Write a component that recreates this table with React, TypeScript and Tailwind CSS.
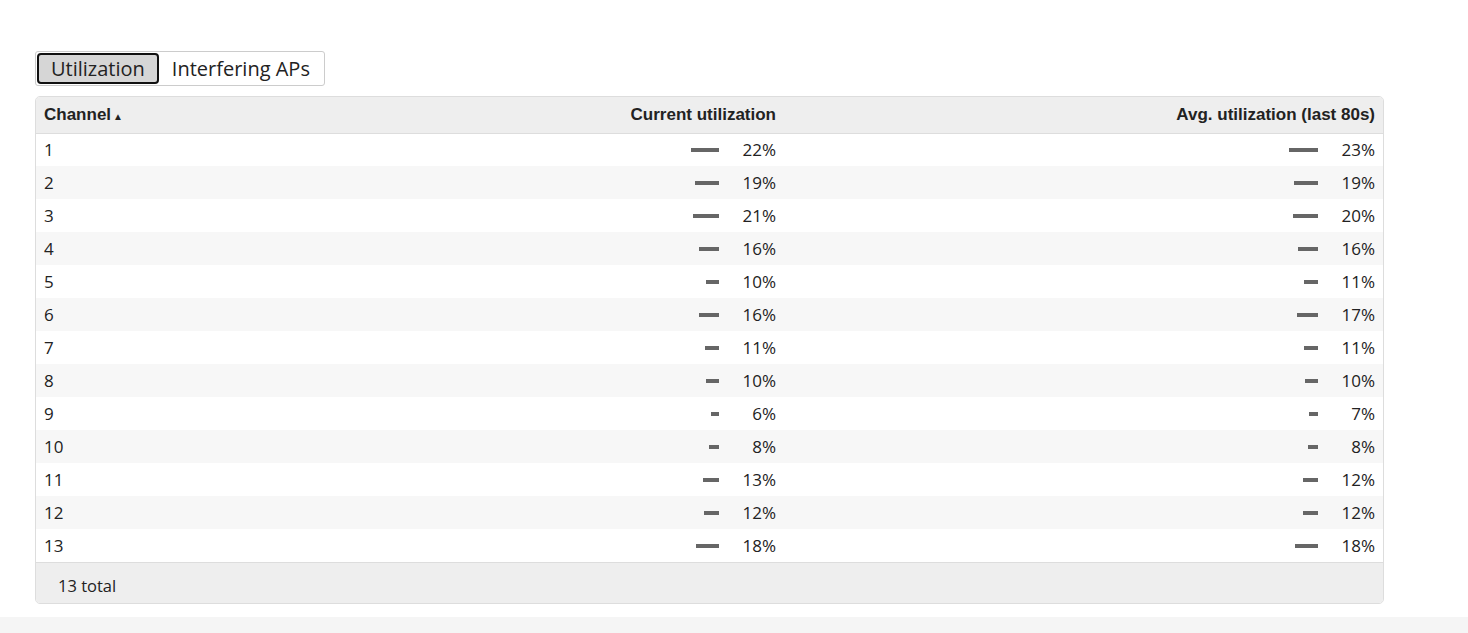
import React from "react";

const rows = [
  { ch: 1, cur: 22, avg: 23 },
  { ch: 2, cur: 19, avg: 19 },
  { ch: 3, cur: 21, avg: 20 },
  { ch: 4, cur: 16, avg: 16 },
  { ch: 5, cur: 10, avg: 11 },
  { ch: 6, cur: 16, avg: 17 },
  { ch: 7, cur: 11, avg: 11 },
  { ch: 8, cur: 10, avg: 10 },
  { ch: 9, cur: 6, avg: 7 },
  { ch: 10, cur: 8, avg: 8 },
  { ch: 11, cur: 13, avg: 12 },
  { ch: 12, cur: 12, avg: 12 },
  { ch: 13, cur: 18, avg: 18 },
];

const Usage = ({ pct }: { pct: number }) => {
  return (
    <div className="flex items-center justify-end">
      <div className="h-[4px] bg-[#666]" style={{ width: Math.round(pct * 1.25) }} />
      <span className="w-[57px] text-right">{pct}%</span>
    </div>
  );
};

const App = () => {
  return (
    <div className="min-h-[633px] bg-white font-['Open_Sans',sans-serif] text-[#222]">
      <div className="px-[35px] pt-[51px] pb-[13px]">
        <div className="inline-flex rounded-[3px] border border-[#ccc] bg-white p-[1px] text-[20px] leading-none">
          <button className="h-[31px] rounded-[4px] border-2 border-[#111] bg-[#d6d6d6] px-[12px]">
            Utilization
          </button>
          <button className="h-[31px] px-[13px]">Interfering APs</button>
        </div>
        <div className="mt-[10px] w-[1349px] overflow-hidden rounded-[5px] border border-[#ddd] text-[17px]">
          <table className="w-full table-fixed border-collapse">
            <colgroup>
              <col className="w-[370px]" />
              <col className="w-[378px]" />
              <col />
            </colgroup>
            <thead>
              <tr className="h-[36px] border-b border-[#ddd] bg-[#eee] font-['Liberation_Sans',sans-serif] text-[17px] font-bold">
                <th className="px-[8px] text-left">
                  Channel<span className="ml-[2px] text-[10px]">▲</span>
                </th>
                <th className="px-[8px] text-right">Current utilization</th>
                <th className="px-[8px] text-right">Avg. utilization (last 80s)</th>
              </tr>
            </thead>
            <tbody>
              {rows.map((r, i) => (
                <tr key={r.ch} className={`h-[33px] ${i % 2 ? "bg-[#f7f7f7]" : "bg-white"}`}>
                  <td className="px-[8px]">{r.ch}</td>
                  <td className="px-[8px]">
                    <Usage pct={r.cur} />
                  </td>
                  <td className="px-[8px]">
                    <Usage pct={r.avg} />
                  </td>
                </tr>
              ))}
            </tbody>
          </table>
          <div className="h-[41px] border-t border-[#ddd] bg-[#eee] pl-[22px] pt-[11px] text-[16.5px]">13 total</div>
        </div>
      </div>
      <div className="h-[17px] bg-[#f5f5f5]" />
    </div>
  );
};

export default App;
